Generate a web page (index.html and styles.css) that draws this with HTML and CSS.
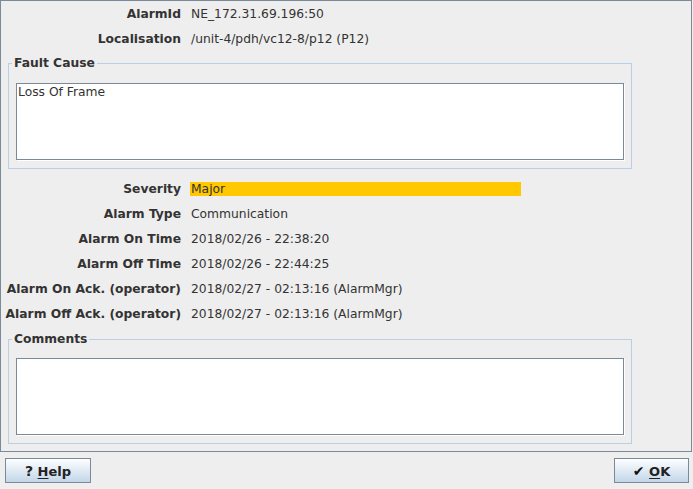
FILE: index.html
```html
<!DOCTYPE html>
<html>
<head>
<meta charset="utf-8">
<link rel="stylesheet" href="styles.css">
</head>
<body>
<div class="dialog">
  <div class="panel">
    <div class="row"><div class="label">AlarmId</div><div class="value">NE_172.31.69.196:50</div></div>
    <div class="row"><div class="label">Localisation</div><div class="value">/unit-4/pdh/vc12-8/p12 (P12)</div></div>
    <fieldset class="group group-fault">
      <legend>Fault Cause</legend>
      <div class="textarea">Loss Of Frame</div>
    </fieldset>
    <div class="rows">
      <div class="row"><div class="label">Severity</div><div class="value"><span class="sev">Major</span></div></div>
      <div class="row"><div class="label">Alarm Type</div><div class="value">Communication</div></div>
      <div class="row"><div class="label">Alarm On Time</div><div class="value">2018/02/26 - 22:38:20</div></div>
      <div class="row"><div class="label">Alarm Off Time</div><div class="value">2018/02/26 - 22:44:25</div></div>
      <div class="row"><div class="label">Alarm On Ack. (operator)</div><div class="value">2018/02/27 - 02:13:16 (AlarmMgr)</div></div>
      <div class="row"><div class="label">Alarm Off Ack. (operator)</div><div class="value">2018/02/27 - 02:13:16 (AlarmMgr)</div></div>
    </div>
    <fieldset class="group group-comments">
      <legend>Comments</legend>
      <div class="textarea"></div>
    </fieldset>
  </div>
  <div class="buttons">
    <button class="btn btn-help"><span class="btn-text"><span class="q">?</span> <u>H</u>elp</span></button>
    <button class="btn btn-ok"><span class="btn-text"><span class="check">&#10004;</span> <u>O</u>K</span></button>
  </div>
</div>
</body>
</html>
```
FILE: styles.css
```css
html, body {
  margin: 0;
  padding: 0;
  background: #eeeeee;
}
body {
  font-family: "DejaVu Sans", sans-serif;
  font-size: 12.3px;
  color: #333333;
  width: 693px;
  height: 489px;
  overflow: hidden;
}
.dialog {
  display: flex;
  flex-direction: column;
}
.panel {
  width: 690px;
  height: 450px;
  border: 1px solid #7a8a99;
  display: flex;
  flex-direction: column;
}
.rows {
  display: flex;
  flex-direction: column;
  margin-top: 7px;
}
.row {
  display: flex;
  align-items: center;
  height: 25px;
}
.label {
  width: 180px;
  text-align: right;
  font-weight: bold;
  white-space: nowrap;
}
.value {
  margin-left: 10px;
  display: flex;
  white-space: nowrap;
}
.sev {
  display: block;
  margin-left: -1px;
  padding-left: 1px;
  width: 330px;
  height: 14px;
  line-height: 14px;
  background: #ffc800;
}
.group {
  margin: 0 0 0 7px;
  width: 624px;
  border: 1px solid #b8cfe5;
  padding: 0 7px 7px 7px;
  box-sizing: border-box;
}
.group legend {
  font-weight: bold;
  line-height: 14px;
  padding: 0 2px;
  margin-left: -4px;
}
.group-fault {
  margin-top: 5px;
  height: 113px;
  padding-top: 13px;
}
.group-comments {
  margin-top: 6px;
  height: 112px;
  padding-top: 12px;
}
.textarea {
  background: #ffffff;
  border: 1px solid #7a8a99;
  box-shadow: 1px 1px 0 #ffffff;
  padding: 1px 0 0 1px;
  box-sizing: border-box;
  height: 77px;
  line-height: 14px;
}
.buttons {
  display: flex;
  justify-content: space-between;
  padding: 6px 4px 0 5px;
}
.btn {
  height: 25px;
  border: 1px solid #7a8a99;
  background: linear-gradient(#fdfeff, #e3ecf5 45%, #c3d6e9);
  font-family: "DejaVu Sans", sans-serif;
  font-weight: bold;
  font-size: 13px;
  color: #222222;
  padding: 0;
  display: flex;
  align-items: center;
  justify-content: center;
}
.btn-text {
  white-space: nowrap;
}
.btn u {
  text-decoration-thickness: 1px;
  text-underline-offset: 2px;
}
.btn-help {
  width: 86px;
}
.btn-ok {
  width: 75px;
}
.q {
  font-size: 14px;
}
.check {
  font-size: 14px;
  color: #111;
}
```
